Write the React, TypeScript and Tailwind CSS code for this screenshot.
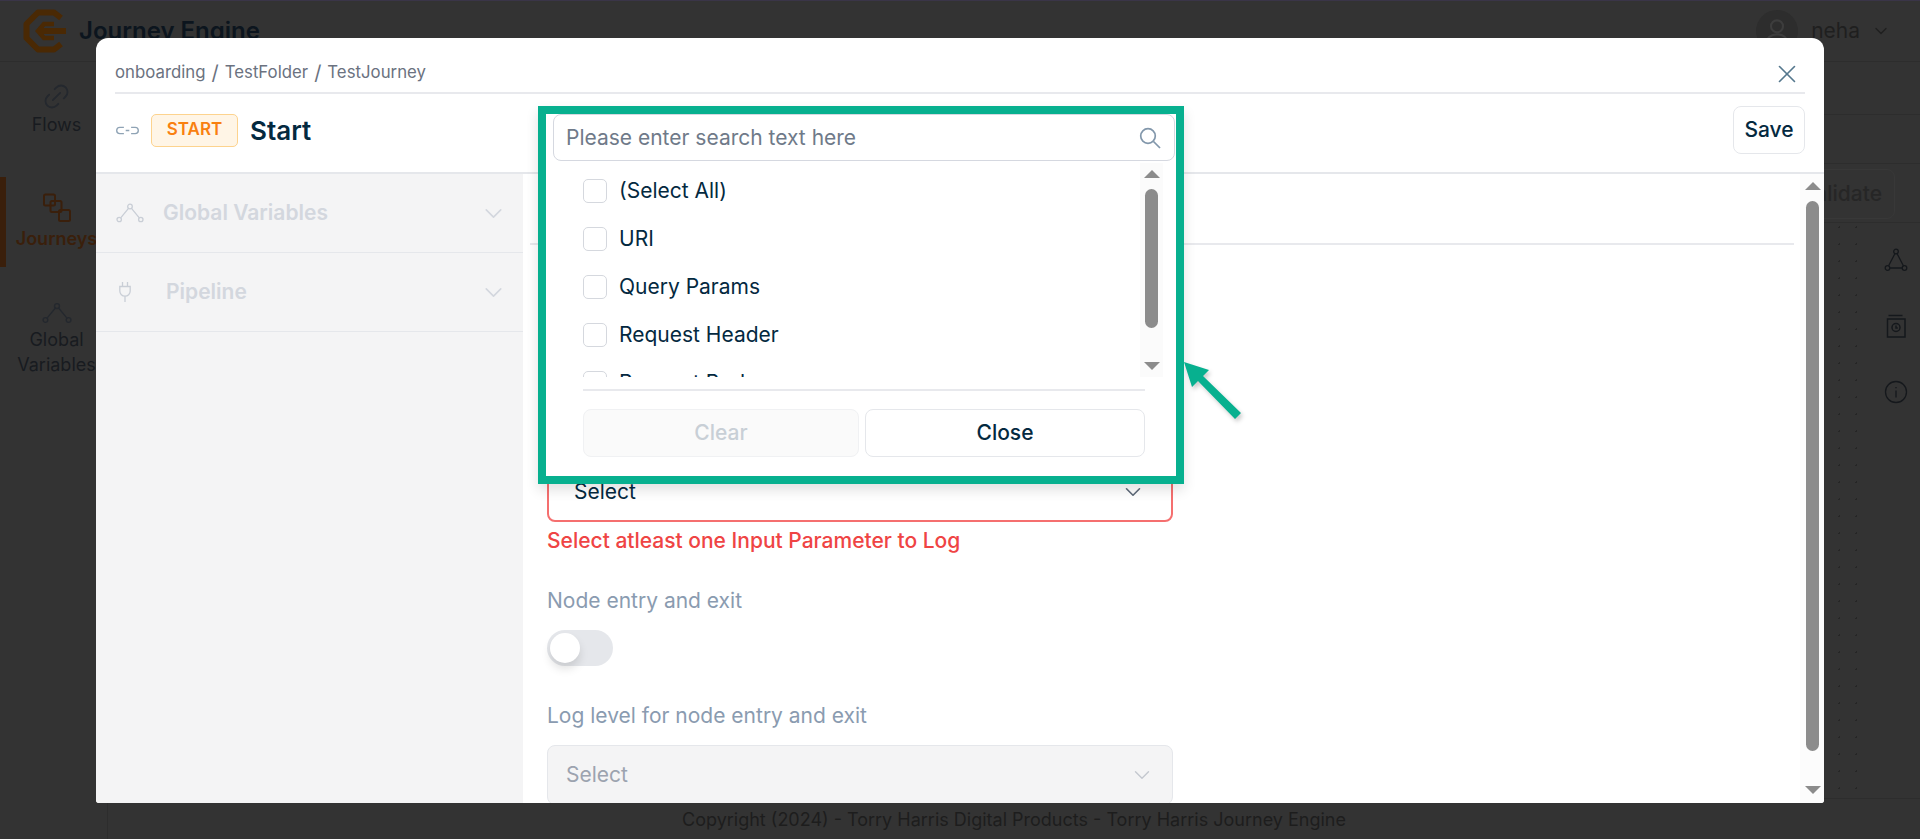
import { ChevronDown, Link2, X } from 'lucide-react'

const font = { fontFamily: 'Inter, "Noto Sans", sans-serif' }

const VariablesIcon = ({ className }: { className: string }) => (
  <svg viewBox="0 0 28 20" fill="none" stroke="currentColor" strokeWidth="1.3" className={className}>
    <circle cx="14" cy="3.5" r="2.3" />
    <circle cx="3.2" cy="16.5" r="2.2" />
    <circle cx="24.8" cy="16.5" r="2.2" />
    <path d="M12.5 5.3 4.7 14.8M15.5 5.3l7.800 9.500" />
  </svg>
)

const Logo = () => (
  <svg viewBox="0 0 44 44" className="-ml-[1px] h-[44px] w-[44px] text-[#4a2904]" fill="none" stroke="currentColor">
    <path d="M38 9 31 3.500H15L3.500 15v14L15 40.500h16l7-5.500" strokeWidth="6" strokeLinejoin="round" />
    <path d="M31 15H21l-6 7 6 7h10" strokeWidth="4.500" />
    <path d="M17 22h26" strokeWidth="6" />
  </svg>
)

const Triangle = ({ down }: { down?: boolean }) => (
  <svg viewBox="0 0 16 8" className="h-[8px] w-[16px] shrink-0 text-[#8c8c8c]" fill="currentColor">
    <polygon points={down ? '0,0 16,0 8,8' : '8,0 16,8 0,8'} />
  </svg>
)

const SideItem = ({ label, icon, active, tall }: { label: string[]; icon: React.ReactNode; active?: boolean; tall?: boolean }) => (
  <div className={`flex flex-col items-center justify-center border-l-[6px] text-[18px] leading-[25px] ${tall ? 'h-[98px]' : 'h-[90px]'} ${active ? 'border-[#3a1f0b] font-semibold text-[#3a1f0b]' : 'border-transparent text-[#181b20]'}`}>
    {icon}
    {label.map((l) => (
      <span key={l} className="whitespace-nowrap">{l}</span>
    ))}
  </div>
)

const AccordionRow = ({ label, icon, gap }: { label: string; icon: React.ReactNode; gap: string }) => (
  <div className="flex h-[79px] shrink-0 items-center border-b border-[#e5e7eb] pl-[20px] pr-[15px]">
    <div className={`flex items-center ${gap}`}>
      {icon}
      <span className="text-[21px] font-semibold text-[#d3d7de]">{label}</span>
    </div>
    <ChevronDown className="ml-auto h-[29px] w-[29px] text-[#d3d7de]" strokeWidth={1.3} />
  </div>
)

const Option = ({ label }: { label: string }) => (
  <div className="flex h-[48px] shrink-0 items-center gap-[12px]">
    <span className="h-[24px] w-[24px] rounded-[5px] border border-[#d5d8de] bg-white" />
    <span className="text-[21px] text-[#04293f]">{label}</span>
  </div>
)

const App = () => {
  return (
    <div className="relative flex h-[839px] w-full flex-col overflow-hidden border-t border-[#3a3548] bg-[#333333]" style={font}>
      {/* page behind the dialog */}
      <div className="flex h-[61px] shrink-0 items-center border-b border-[#2d2d2d] pl-[24px] pr-[29px]">
        <Logo />
        <span className="ml-[12px] text-[24px] font-semibold text-[#0c151e]">Journey Engine</span>
        <span className="ml-auto flex h-[42px] w-[42px] items-center justify-center rounded-full bg-[#2d2d2d]">
          <svg viewBox="0 0 24 24" className="h-[32px] w-[32px] text-[#3d3d3d]" fill="none" stroke="currentColor" strokeWidth="1.6">
            <circle cx="12" cy="8.5" r="4.5" />
            <path d="M4 22c0-5 3.500-7.500 8-7.500s8 2.500 8 7.500" />
          </svg>
        </span>
        <span className="ml-[13px] text-[21px] text-[#1f1f1f]">neha</span>
        <ChevronDown className="ml-[11px] h-[20px] w-[20px] text-[#1f1f1f]" strokeWidth={1.6} />
      </div>
      <div className="flex min-h-0 flex-1">
        <div className="flex w-[108px] shrink-0 flex-col gap-[23px] border-r border-[#2d2d2d] pt-[2px]">
          <SideItem label={['Flows']} icon={<Link2 className="h-[31px] w-[31px] -rotate-45 text-[#24282e]" strokeWidth={1.4} />} />
          <SideItem active label={['Journeys']} icon={
            <svg viewBox="0 0 30 30" className="mb-[3px] h-[30px] w-[30px]" fill="none" stroke="currentColor" strokeWidth="2">
              <rect x="2" y="1.500" width="11" height="11" rx="1.500" />
              <rect x="8.500" y="8" width="11" height="11" rx="1.500" />
              <rect x="17" y="17" width="11" height="11" rx="1.500" />
            </svg>
          } />
          <SideItem tall label={['Global', 'Variables']} icon={<VariablesIcon className="mb-[3px] h-[22px] w-[30px] text-[#24282e]" />} />
        </div>
        <div className="flex min-w-0 flex-1 flex-col">
          <div className="h-[53px] shrink-0 border-b border-[#2d2d2d]" />
          <div className="h-[49px] shrink-0 border-b border-[#2d2d2d]" />
          <div className="flex h-[59px] shrink-0 items-center justify-end border-b border-[#2d2d2d] pr-[25px] pt-[2px]">
            <span className="rounded-lg border border-[#383838] px-[12px] py-[8px] text-[21px] font-medium text-[#262626]">Validate</span>
          </div>
          <div className="flex min-h-0 flex-1">
            <div className="flex-1 bg-[radial-gradient(#262626_1px,transparent_1px)] bg-[size:17px_17px] bg-[position:6px_-4px]" />
            <div className="flex w-[48px] shrink-0 flex-col items-center gap-[42px] pt-[25px] text-[#15181c]">
              <svg viewBox="0 0 24 24" className="h-[24px] w-[24px]" fill="none" stroke="currentColor" strokeWidth="1.300">
                <circle cx="12" cy="3.500" r="2.300" />
                <circle cx="3.500" cy="20" r="2.300" />
                <circle cx="20.500" cy="20" r="2.300" />
                <path d="M11 5.500 4.500 18M13 5.500 19.500 18M5.800 20h12.400" />
              </svg>
              <svg viewBox="0 0 24 24" className="h-[24px] w-[24px]" fill="none" stroke="currentColor" strokeWidth="1.500">
                <path d="M4.500 1.500h14M3.500 5h17.500v18H3.500z" />
                <circle cx="12" cy="13.500" r="4" />
                <path d="M12 11.500v2.500h1.800" />
              </svg>
              <svg viewBox="0 0 24 24" className="h-[24px] w-[24px]" fill="none" stroke="currentColor" strokeWidth="1.300">
                <circle cx="12" cy="12" r="10.500" />
                <path d="M12 10.500v7M12 7v1.300" />
              </svg>
            </div>
          </div>
          <div className="flex h-[41px] shrink-0 items-center justify-center border-t border-[#2d2d2d] pt-[1px] text-[18px] text-[#1d1d1d]">
            Copyright (2024) - Torry Harris Digital Products - Torry Harris Journey Engine
          </div>
        </div>
      </div>

      {/* dialog */}
      <div className="absolute left-[96px] top-[37px] flex h-[765px] w-[1728px] flex-col overflow-hidden rounded-t-xl rounded-b-[3px] bg-white">
        <div className="mx-[19px] flex h-[56px] shrink-0 items-center justify-between border-b-2 border-[#e8e9ed] pt-[15px]">
          <div className="flex items-center gap-[6px] text-[16.800px] text-[#6b7280]">
            <span>onboarding</span>
            <span className="text-[20px]">/</span>
            <span>TestFolder</span>
            <span className="text-[20px]">/</span>
            <span>TestJourney</span>
          </div>
          <X className="mr-[3px] mt-[3px] h-[30px] w-[30px] text-[#55788e]" strokeWidth={1.3} />
        </div>
        <div className="flex h-[80px] shrink-0 items-center border-b-2 border-[#e5e7eb] pb-[6px] pl-[20px] pr-[19px]">
          <svg viewBox="0 0 24 10" className="h-[9px] w-[23px] text-[#8fa3b5]" fill="none" stroke="currentColor" strokeWidth="1.500">
            <path d="M8 1.500H3.500a3.500 3.500 0 0 0 0 7H8M16 1.500h4.500a3.500 3.500 0 0 1 0 7H16M10 5h4" />
          </svg>
          <span className="ml-[12px] flex h-[33px] w-[87px] items-center justify-center rounded-[5px] border border-[#fdd38e] bg-[#fff5e6] text-[17px] font-semibold text-[#f98010]">START</span>
          <span className="ml-[12px] text-[26px] font-semibold text-[#04293f]">Start</span>
          <span className="ml-auto flex h-[48px] w-[72px] items-center justify-center rounded-lg border border-[#e5e7eb] text-[21px] font-medium text-[#04293f]">Save</span>
        </div>
        <div className="flex min-h-0 flex-1">
          <div className="flex w-[427px] shrink-0 flex-col bg-[#f4f4f5]">
            <AccordionRow label="Global Variables" gap="gap-[19px]" icon={<VariablesIcon className="h-[20px] w-[28px] text-[#c9ced6]" />} />
            <AccordionRow label="Pipeline" gap="gap-[35px]" icon={
              <svg viewBox="0 0 12 20" className="ml-[3px] h-[20px] w-[12px] text-[#c9ced6]" fill="none" stroke="currentColor" strokeWidth="1.300">
                <path d="M3.500 0v4.500M8.500 0v4.500M.8 4.500h10.400V9a5.200 5.200 0 0 1-10.400 0zM6 14v6" />
              </svg>
            } />
          </div>
          <div className="flex min-w-0 flex-1 flex-col overflow-hidden pl-[7px]">
            <div className="mr-[6px] mt-[69px] h-[2px] shrink-0 bg-[#e8e9ed]" />
            <div className="mt-[215px] flex flex-col pl-[17px]">
              <div className="flex h-[62px] w-[626px] shrink-0 items-center justify-between rounded-lg border-2 border-[#f56f6f] pl-[25px] pr-[25px] pt-[2px] text-[21px] text-[#04293f]">
                <span>Select</span>
                <ChevronDown className="h-[26px] w-[26px] text-[#5f6b7a]" strokeWidth={1.5} />
              </div>
              <p className="mt-[6px] text-[21px] font-medium leading-[26px] text-[#ef4444]">Select atleast one Input Parameter to Log</p>
              <p className="mt-[34px] text-[21px] leading-[26px] text-[#8a9bb0]">Node entry and exit</p>
              <div className="relative mt-[16px] h-[36px] w-[66px] rounded-full bg-[#e5e7eb]">
                <span className="absolute left-[3px] top-[3px] h-[30px] w-[30px] rounded-full bg-white shadow-[0_6px_10px_rgba(0,0,0,0.12)]" />
              </div>
              <p className="mt-[37px] text-[21px] leading-[26px] text-[#8a9bb0]">Log level for node entry and exit</p>
              <div className="mt-[16px] flex h-[60px] w-[626px] shrink-0 items-center justify-between rounded-lg border border-[#e5e7eb] bg-[#f4f4f5] pl-[18px] pr-[17px] text-[21px] text-[#9ca3af]">
                <span>Select</span>
                <ChevronDown className="h-[26px] w-[26px] text-[#c4c8cf]" strokeWidth={1.3} />
              </div>
            </div>
          </div>
          <div className="flex w-[24px] shrink-0 flex-col items-center bg-[#fcfcfc] pt-[8px] pl-[1px]">
            <Triangle />
            <div className="mt-[11px] h-[550px] w-[13px] rounded-full bg-[#8c8c8c]" />
            <div className="flex-1" />
            <div className="mb-[9px]"><Triangle down /></div>
          </div>
        </div>
      </div>

      {/* annotation: highlighted filter popup */}
      <div className="absolute left-[538px] top-[105px] flex h-[378px] w-[646px] flex-col border-[8px] border-[#07b08f] bg-white shadow-[0_6px_12px_rgba(0,0,0,0.12)]">
        <div className="ml-[7px] flex h-[47px] w-[622px] shrink-0 items-center justify-between rounded-lg border border-[#d5d8e0] pl-[12px] pr-[13px]">
          <span className="text-[21px] text-[#6f7a89]">Please enter search text here</span>
          <svg viewBox="0 0 22 22" className="h-[22px] w-[22px] text-[#8297ab]" fill="none" stroke="currentColor" strokeWidth="1.700">
            <circle cx="9" cy="9" r="7.300" />
            <path d="m14.500 14.500 6.500 6.500" />
          </svg>
        </div>
        <div className="flex h-[216px] shrink-0 pl-[37px]">
          <div className="flex flex-1 flex-col overflow-hidden pt-[6px]">
            <Option label="(Select All)" />
            <Option label="URI" />
            <Option label="Query Params" />
            <Option label="Request Header" />
            <Option label="Request Body" />
          </div>
          <div className="mr-[13px] mt-[2px] flex h-[214px] w-[23px] shrink-0 flex-col items-center bg-[#fbfbfb] pt-[7px]">
            <Triangle />
            <div className="mt-[11px] h-[139px] w-[13px] rounded-full bg-[#8c8c8c]" />
            <div className="mt-[34px]"><Triangle down /></div>
          </div>
        </div>
        <div className="ml-[37px] mt-[12px] h-[2px] w-[562px] shrink-0 bg-[#e8e9ed]" />
        <div className="ml-[37px] mt-[18px] flex w-[562px] gap-[6px]">
          <span className="flex h-[48px] w-[276px] items-center justify-center rounded-lg border border-[#f0f1f3] bg-[#fafafa] text-[21px] font-medium text-[#c8cfd6]">Clear</span>
          <span className="flex h-[48px] flex-1 items-center justify-center rounded-lg border border-[#e5e7eb] text-[21px] font-medium text-[#04293f]">Close</span>
        </div>
      </div>
      <svg viewBox="0 0 62 62" className="absolute left-[1182px] top-[359px] h-[62px] w-[62px] text-[#07b08f] drop-shadow-[2px_3px_2px_rgba(0,0,0,0.2)]" fill="currentColor">
        <polygon points="2,2 27,10 21,16 59,53 53,59 16,21 10,27" />
      </svg>
    </div>
  )
}

export default App
